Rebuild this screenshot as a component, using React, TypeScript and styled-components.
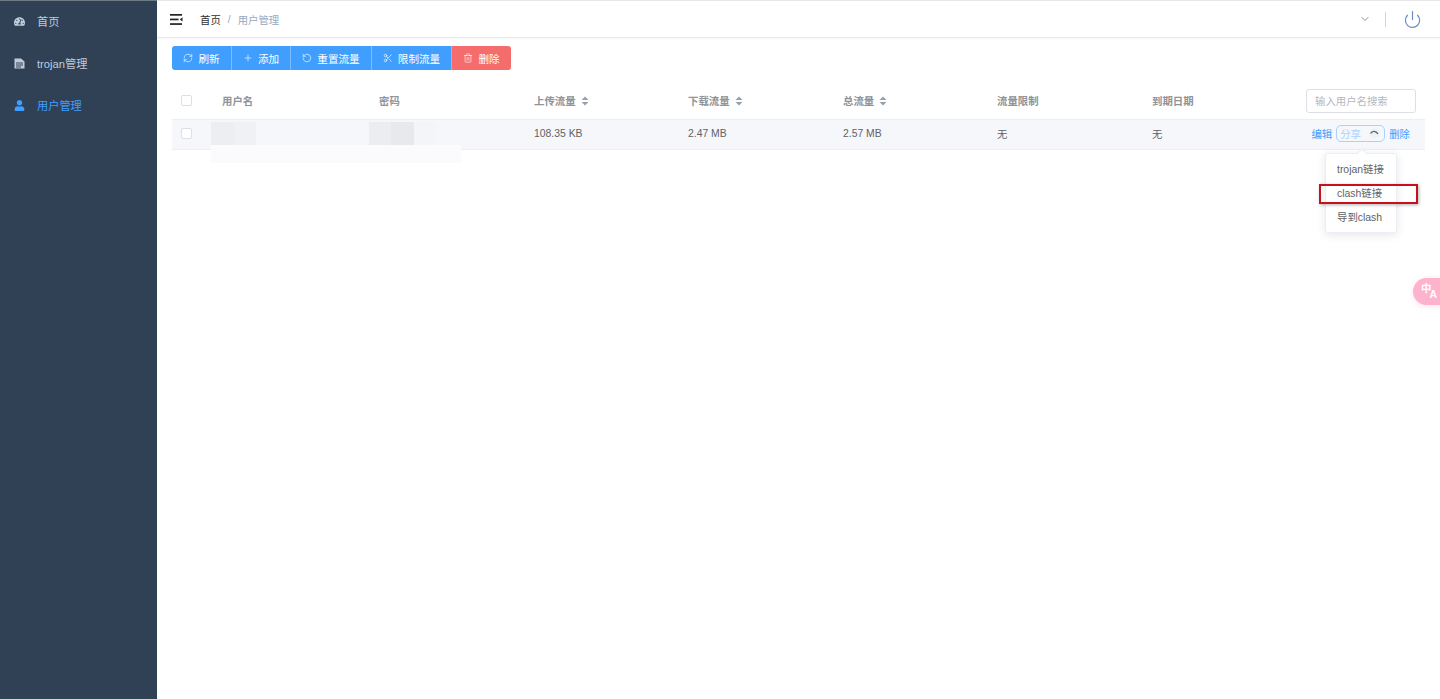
import React from 'react';
import styled, { createGlobalStyle } from 'styled-components';
import { FaTachometerAlt, FaUser } from 'react-icons/fa';
import { RefreshCw, Plus, RotateCw, Scissors, Trash2, ChevronDown, Power } from 'lucide-react';

const Global = createGlobalStyle`
  html, body { margin: 0; padding: 0; height: 100%; background: #fff; }
  body { font-family: "Liberation Sans", "Noto Sans CJK SC", sans-serif; font-size: 11.2px; color: #606266; overflow: hidden; }
  * { box-sizing: border-box; }
`;

const Page = styled.div`
  display: flex;
  height: 699px;
  width: 1440px;
  position: relative;
  overflow: hidden;
`;

const Sidebar = styled.aside`
  width: 157px;
  flex: none;
  background: #304156;
  box-shadow: inset 0 1px 0 #6f7a87;
  display: flex;
  flex-direction: column;
`;

const MenuItem = styled.div<{ $active?: boolean }>`
  height: 42px;
  display: flex;
  align-items: center;
  padding-left: 14px;
  gap: 12px;
  color: ${p => (p.$active ? '#409eff' : '#bfcbd9')};
  font-size: 11.2px;
  svg { width: 11px; height: 11px; flex: none; }
`;

const Main = styled.main`
  flex: 1;
  min-width: 0;
  display: flex;
  flex-direction: column;
`;

const Header = styled.header`
  height: 38px;
  flex: none;
  display: flex;
  align-items: center;
  border-top: 1px solid #e8e8e8;
  border-bottom: 1px solid #e6e8eb;
  box-shadow: 0 1px 2px rgba(0, 21, 41, 0.04);
  padding-left: 13px;
  padding-right: 18px;
`;

const Crumbs = styled.div`
  display: flex;
  align-items: center;
  margin-left: 17px;
  font-size: 10.4px;
  color: #97a8be;
`;

const CrumbRoot = styled.span`
  color: #303133;
`;

const CrumbSep = styled.span`
  margin: 0 7px;
  color: #97a8be;
`;

const HeaderRight = styled.div`
  margin-left: auto;
  display: flex;
  align-items: center;
  color: #5f6a76;
`;

const VDivider = styled.span`
  width: 1px;
  height: 15px;
  background: #d0d3d8;
  margin: 0 17px 0 14px;
`;

const Content = styled.div`
  padding: 8px 15px 0;
  display: flex;
  flex-direction: column;
  position: relative;
`;

const ButtonGroup = styled.div`
  display: flex;
  height: 24px;
  margin-bottom: 14px;
`;

const ToolButton = styled.button<{ $danger?: boolean; $w: number }>`
  width: ${p => p.$w}px;
  height: 24px;
  border: 0;
  border-right: 1px solid ${p => (p.$danger ? '#f56c6c' : '#7dbcff')};
  background: ${p => (p.$danger ? '#f56c6c' : '#409eff')};
  color: #fff;
  font: inherit;
  font-size: 10.6px;
  display: flex;
  align-items: center;
  justify-content: center;
  gap: 5px;
  padding: 0;
  &:first-child { border-radius: 3px 0 0 3px; }
  &:last-child { border-radius: 0 3px 3px 0; border-right: 0; }
  svg { width: 10px; height: 10px; stroke-width: 1.5; }
`;

const columns = '50px 157px 155px 154px 155px 154px 155px 144px 1fr';

const Row = styled.div<{ $head?: boolean }>`
  display: grid;
  grid-template-columns: ${columns};
  align-items: center;
  height: ${p => (p.$head ? '36px' : '30px')};
  padding-bottom: 2px;
  background: ${p => (p.$head ? '#fff' : '#f5f7fa')};
  border-bottom: 1px solid #ebeef5;
  color: ${p => (p.$head ? '#909399' : '#606266')};
  font-weight: ${p => (p.$head ? 'bold' : 'normal')};
  font-size: 10.4px;
`;

const Table = styled.div`
  display: flex;
  flex-direction: column;
`;

const CheckCell = styled.div`
  padding-left: 9px;
  display: flex;
`;

const CheckBox = styled.span`
  width: 11px;
  height: 11px;
  background: #fff;
  border: 1px solid #dcdfe6;
  border-radius: 2px;
`;

const SortCell = styled.div`
  display: flex;
  align-items: center;
  gap: 5px;
`;

const SearchCell = styled.div`
  display: flex;
  justify-content: flex-end;
  padding-right: 9px;
`;

const SearchInput = styled.div`
  width: 110px;
  height: 24px;
  border: 1px solid #dcdfe6;
  border-radius: 3px;
  padding-left: 8px;
  display: flex;
  align-items: center;
  color: #b5b8bf;
  font-weight: normal;
  font-size: 10.4px;
  white-space: nowrap;
`;

const ActionCell = styled.div`
  display: flex;
  justify-content: flex-end;
  align-items: center;
  gap: 4px;
  padding-right: 15px;
  color: #409eff;
  font-size: 10.4px;
  white-space: nowrap;
`;

const ShareButton = styled.span`
  width: 49px;
  height: 17px;
  border: 1.5px solid #a6d2ff;
  border-radius: 5px;
  display: flex;
  align-items: center;
  justify-content: space-between;
  padding: 0 3px;
  color: #a9d3ff;
`;

const Blur = styled.div<{ $x: number; $y: number; $w: number; $h: number; $c: string }>`
  position: absolute;
  left: ${p => p.$x}px;
  top: ${p => p.$y}px;
  width: ${p => p.$w}px;
  height: ${p => p.$h}px;
  background: ${p => p.$c};
`;

const Dropdown = styled.div`
  position: absolute;
  left: 1325px;
  top: 153px;
  width: 72px;
  height: 80px;
  background: #fff;
  border: 1px solid #ebeef5;
  border-radius: 3px;
  box-shadow: 0 2px 10px rgba(0, 0, 0, 0.1);
  padding: 4px 0;
  display: flex;
  flex-direction: column;
  &::before {
    content: '';
    position: absolute;
    top: -4px;
    left: 32px;
    width: 7px;
    height: 7px;
    background: #fff;
    border-left: 1px solid #ebeef5;
    border-top: 1px solid #ebeef5;
    transform: rotate(45deg);
  }
`;

const DropItem = styled.div`
  height: 24px;
  line-height: 24px;
  padding-left: 11px;
  font-size: 10.4px;
  color: #606266;
  white-space: nowrap;
`;

const Highlight = styled.div`
  position: absolute;
  left: 1319px;
  top: 184px;
  width: 99px;
  height: 20px;
  border: 2px solid #c8101c;
  box-shadow: 1px 1px 3px rgba(0, 0, 0, 0.3);
`;

const Translate = styled.div`
  position: absolute;
  left: 1413px;
  top: 278px;
  width: 40px;
  height: 27px;
  border-radius: 14px;
  background: #fdb2cd;
  box-shadow: 0 1px 6px rgba(253, 178, 205, 0.4);
  color: #fff;
  padding-left: 8px;
  display: flex;
  align-items: center;
  font-size: 10.5px;
  font-weight: bold;
  line-height: 1;
`;

const TransA = styled.span`
  margin-top: 6px;
  margin-left: -2px;
`;

const TransZh = styled.span`
  margin-top: -6px;
`;

const Hamburger = () => (
  <svg width="13" height="11" viewBox="0 0 13 11" fill="#222">
    <rect x="0" y="0" width="12" height="1.7" />
    <rect x="0" y="4.6" width="8.5" height="1.7" />
    <rect x="0" y="9.2" width="12" height="1.7" />
    <path d="M12.5 3.2v4.4L9.8 5.4z" />
  </svg>
);

const Caret = () => (
  <svg width="8" height="10" viewBox="0 0 8 10" fill="#97a0ac">
    <path d="M4 0.5 7.5 4H0.5z" />
    <path d="M4 9.5 0.5 6h7z" />
  </svg>
);

const DocIcon = () => (
  <svg viewBox="0 0 11 11" fill="currentColor">
    <path d="M0.5 0.5H7L10.5 3.5V10.5H0.5zM2 4.4v1h7v-1zM2 6.4v1h7v-1zM2 8.4v1h5v-1z" fillRule="evenodd" />
  </svg>
);

const ArcIcon = () => (
  <svg width="13" height="11" viewBox="0 0 13 11" fill="none">
    <circle cx="6.5" cy="5.5" r="5" fill="#eaf2fb" />
    <path d="M2.5 5.5C4 2.5 8 2.5 10 6" stroke="#606266" strokeWidth="1.3" />
  </svg>
);

export default function App() {
  return (
    <Page>
      <Global />
      <Sidebar>
        <MenuItem><FaTachometerAlt /><span>首页</span></MenuItem>
        <MenuItem><DocIcon /><span>trojan管理</span></MenuItem>
        <MenuItem $active><FaUser /><span>用户管理</span></MenuItem>
      </Sidebar>
      <Main>
        <Header>
          <Hamburger />
          <Crumbs>
            <CrumbRoot>首页</CrumbRoot>
            <CrumbSep>/</CrumbSep>
            <span>用户管理</span>
          </Crumbs>
          <HeaderRight>
            <ChevronDown size={12} strokeWidth={1.5} />
            <VDivider />
            <Power size={19} strokeWidth={1.5} color="#6a8cc0" />
          </HeaderRight>
        </Header>
        <Content>
          <ButtonGroup>
            <ToolButton $w={60}><RefreshCw />刷新</ToolButton>
            <ToolButton $w={59}><Plus />添加</ToolButton>
            <ToolButton $w={81}><RotateCw style={{ transform: 'scaleX(-1)' }} />重置流量</ToolButton>
            <ToolButton $w={80}><Scissors />限制流量</ToolButton>
            <ToolButton $w={59} $danger><Trash2 />删除</ToolButton>
          </ButtonGroup>
          <Table>
            <Row $head>
              <CheckCell><CheckBox /></CheckCell>
              <div>用户名</div>
              <div>密码</div>
              <SortCell>上传流量<Caret /></SortCell>
              <SortCell>下载流量<Caret /></SortCell>
              <SortCell>总流量<Caret /></SortCell>
              <div>流量限制</div>
              <div>到期日期</div>
              <SearchCell><SearchInput>输入用户名搜索</SearchInput></SearchCell>
            </Row>
            <Row>
              <CheckCell><CheckBox /></CheckCell>
              <div />
              <div />
              <div>108.35 KB</div>
              <div>2.47 MB</div>
              <div>2.57 MB</div>
              <div>无</div>
              <div>无</div>
              <ActionCell>
                <span>编辑</span>
                <ShareButton>分享<ArcIcon /></ShareButton>
                <span>删除</span>
              </ActionCell>
            </Row>
          </Table>
        </Content>
      </Main>
      <Blur $x={211} $y={122} $w={23} $h={23} $c="#edeef1" />
      <Blur $x={234} $y={122} $w={22} $h={23} $c="#f0f1f4" />
      <Blur $x={369} $y={122} $w={22} $h={23} $c="#ecedf0" />
      <Blur $x={391} $y={122} $w={23} $h={23} $c="#e8e9ec" />
      <Blur $x={414} $y={122} $w={22} $h={23} $c="#f3f5f8" />
      <Blur $x={211} $y={145} $w={250} $h={18} $c="#fbfbfd" />
      <Dropdown>
        <DropItem>trojan链接</DropItem>
        <DropItem>clash链接</DropItem>
        <DropItem>导到clash</DropItem>
      </Dropdown>
      <Highlight />
      <Translate>
        <TransZh>中</TransZh>
        <TransA>A</TransA>
      </Translate>
    </Page>
  );
}
